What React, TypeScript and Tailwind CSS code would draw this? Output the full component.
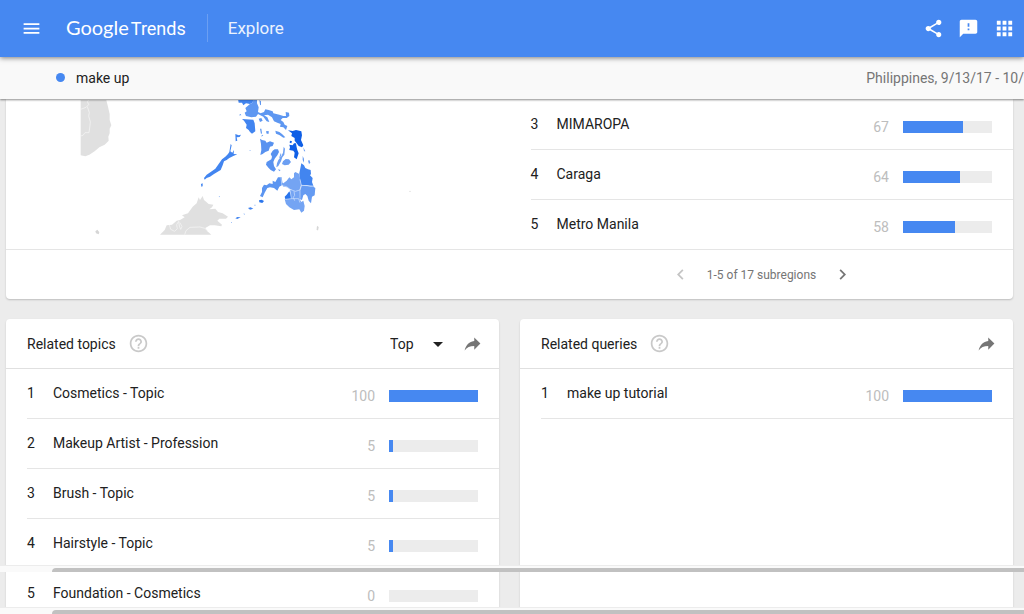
import {
  MdApps,
  MdArrowDropDown,
  MdChevronLeft,
  MdChevronRight,
  MdFeedback,
  MdHelpOutline,
  MdMenu,
  MdReply,
  MdShare,
} from "react-icons/md"

type Item = { rank: number; label: string; value: number }

const SUBREGIONS: Item[] = [
  { rank: 3, label: "MIMAROPA", value: 67 },
  { rank: 4, label: "Caraga", value: 64 },
  { rank: 5, label: "Metro Manila", value: 58 },
]

const TOPICS: Item[] = [
  { rank: 1, label: "Cosmetics - Topic", value: 100 },
  { rank: 2, label: "Makeup Artist - Profession", value: 5 },
  { rank: 3, label: "Brush - Topic", value: 5 },
  { rank: 4, label: "Hairstyle - Topic", value: 5 },
  { rank: 5, label: "Foundation - Cosmetics", value: 0 },
]

const QUERIES: Item[] = [{ rank: 1, label: "make up tutorial", value: 100 }]

function RankedList({ items }: { items: Item[] }) {
  return (
    <ol className="pl-[21px]">
      {items.map((item) => (
        <li
          key={item.rank}
          className="flex h-[50px] items-center border-b border-[#e5e5e5] pb-[2px] pr-[21px]"
        >
          <span className="w-[26px]">{item.rank}</span>
          <span className="flex-1 whitespace-nowrap">{item.label}</span>
          <div className="flex items-center gap-[14px] pt-[6px]">
            <span className="text-[#bdbdbd]">{item.value}</span>
            <div className="h-3 w-[89px] bg-[#ececec]">
              <div className="h-full bg-[#4688f1]" style={{ width: `${item.value}%` }} />
            </div>
          </div>
        </li>
      ))}
    </ol>
  )
}

function RegionMap() {
  return (
    <svg viewBox="0 0 420 149" className="h-[149px] w-[420px]" role="img" aria-label="Interest by subregion">
      <g transform="translate(54 -10) scale(0.33333)" fill="#e0e0e0">
        <path d="M62 27H138L144 50 149 72 149 90 154 106 149 116 149 130 145 140 146 152 134 164 118 172 104 184 88 194 76 199 62 196Z" />
        <path d="M106 424l6-5 6 8-2 6-8-3z" fill="#d6d6d6" />
        <path
          d="M62 58l16-6 8-8-4-10 8-7M82 50l6 18-2 10 5 18-2 18-2 14-12 0-6 8-7 2"
          fill="none"
          stroke="#f7f7f7"
          strokeWidth="2"
        />
      </g>
      <g transform="translate(184 -10) scale(0.33333)">
        {/* Borneo */}
        <path
          fill="#e0e0e0"
          d="M-90 434L-76 420-70 406-54 404-40 392-30 390-16 382-24 376-6 370 8 350 20 340 26 322 30 330 38 318 42 330 56 342 70 344 66 352 58 358 76 356 84 366 98 370 114 380 108 386 88 386 82 392 96 404 94 409 74 406 60 406 46 414 52 424 64 434Z"
        />
        <path
          d="M-62 404l4 14 12 6 8-8-2-12 6-10 2 14 4 10 4-8-6-12M-16 434l4-12 12-10 30-1 14 4 10 8"
          fill="none"
          stroke="#f7f7f7"
          strokeWidth="2"
        />
        <path fill="#d6d6d6" d="M381 407l5 4-2 11-4-4z" />
        <circle cx="660" cy="304" r="2" fill="#d6d6d6" />

        {/* Luzon */}
        <path fill="#4285f0" d="M144 27H190L188 38 180 42 168 40 160 46 156 38 146 38Z" />
        <path
          fill="#5e97f1"
          d="M190 27H201V40L206 52 204 66 212 70 222 66 226 58 236 60 248 64 250 70 268 74 280 78 288 78 287 66 297 68 298 78 290 84 278 84 272 90 280 96 284 104 292 108 288 120 280 112 270 110 272 102 262 98 252 94 246 82 234 74 222 76 232 82 238 96 230 94 220 80 204 72 198 80 184 82 168 78 164 68 170 64 166 54 180 42 188 38Z"
        />
        <path fill="#5e97f1" d="M206 86l8-2 4 8-8 4zM210 116l4 0 2 14-3 2zM228 124l8-1 0 8-6 0zM208 30l5 4 0 12-3-2zM146 76l6-4 2 4zM256 122l12 4 8 6 10 10-6 1-12-8-10-4zM216 134l4 2-6 4z" />

        {/* MIMAROPA */}
        <path fill="#4285f0" d="M156 87L190 89 194 100 196 124 186 131 180 126 176 120 168 114 170 104 162 92Z" />
        <path
          fill="#4285f0"
          d="M122 162L125 166 121 184 127 188 132 180 131 192 142 193 130 198 118 204 110 210 102 214 98 226 92 240 82 246 72 252 60 260 50 264 44 269 42 264 50 254 62 246 76 236 86 222 96 208 106 200 114 192 118 186 120 174ZM136 132L146 136 153 134 149 141 140 142 142 152 137 154ZM33 282L38 280 38 289 34 290Z"
        />

        {/* Visayas */}
        <path fill="#0f5fe6" d="M294 121L308 123 318 120 334 124 336 136 333 150 340 166 336 172 326 168 320 160 314 152 314 144 304 138 306 130Z" />
        <path fill="#0f5fe6" d="M298 164l10 2 4-6 6 0 2 12 2 8 4 10-2 6-4 12-8-6 2-14-4-6-12-2 2-8zM300 152l6 2-2 6-5-2z" />
        <path fill="#5892f0" d="M210 146L216 150 226 152 230 158 240 154 252 158 248 168 240 170 236 182 226 186 218 192 211 195 214 180 213 162Z" />
        <path fill="#5892f0" d="M248 182L254 178 264 178 267 186 262 196 254 206 250 216 252 228 258 238 252 245 242 240 236 234 228 224 230 216 244 208 246 200 242 192Z" />
        <path fill="#6c9ff2" d="M281 170l4 6-2 18-6 8-4 12-8 14-6 4 2-12 4-10 8-10 6-12zM268 202l4-12 2 2-4 16zM279 214l8-7 10 1 6 8-7 8-12 2-8-4z" />
        <path fill="#6c9ff2" d="M340 172l4 8 2 4-4 0zM338 198l4 8 0 12-4-8zM354 212l4-2 3 8-4 4zM264 238l8 2-4 4z" />

        {/* Mindanao */}
        <path fill="#4285f0" d="M334 220L342 226 346 234 354 238 362 240 363 252 360 256 368 264 366 276 371 290 350 286 334 286 330 270 328 250Z" />
        <path fill="#74a4f3" d="M272 276L280 280 290 272 298 262 304 268 312 262 312 250 316 246 328 252 334 286 330 300 316 304 300 298 292 292 280 290Z" />
        <path fill="#5b95f1" d="M264 262L275 262 278 284 268 290 262 302 252 294 240 292 232 294 224 308 218 322 210 318 216 306 216 294 222 284 230 286 238 280 248 282 248 272 256 276Z" />
        <path fill="#659bf2" d="M334 286L370 290 376 294 374 316 366 320 363 340 356 332 352 318 346 312 340 316 336 330 326 326 328 302Z" />
        <path fill="#74a4f3" d="M300 300L330 300 328 326 334 336 340 332 344 348 342 362 334 368 328 358 312 360 298 352 288 342 284 328 302 326Z" />
        <path fill="#2a75ec" d="M290 314L298 304 302 312 304 326 286 328 284 320Z" />
        <path
          d="M273 262l3 26M278 288l12 2 10 8 16 6 14-4 4-14 36 2M330 268l4 18-4 14 0 26M300 300l4 26-18 2M312 304l2 12-4 6 4 10M304 326l22 0 4 12"
          fill="none"
          stroke="#d5e4fc"
          strokeWidth="2"
        />
        <path fill="#2a75ec" d="M207 331l8-2 7 4-5 6-9-2z" />
        <path fill="#4285f0" d="M174 354l8-2 8 4-10 3zM136 385l6-4 10 1-10 5zM122 397l4 0 0 2zM160 371l4 0 0 3zM86 319l3 0 0 3zM192 345l4-1 0 3zM178 180l3 0 0 3z" />
      </g>
    </svg>
  )
}

function CardHeader({ title, sortable }: { title: string; sortable?: boolean }) {
  return (
    <div className="flex h-[50px] items-center border-b border-[#e0e0e0] pl-[21px] pr-4">
      <h2>{title}</h2>
      <button aria-label={`Help: ${title}`} className="ml-3 text-[#c9c9c9]">
        <MdHelpOutline size={21} />
      </button>
      <div className="ml-auto flex items-center gap-3">
        {sortable && (
          <div className="relative flex items-center">
            <select
              aria-label="Sort topics"
              className="w-[60px] cursor-pointer appearance-none bg-transparent outline-none"
            >
              <option>Top</option>
            </select>
            <MdArrowDropDown size={24} className="pointer-events-none absolute right-0" />
          </div>
        )}
        <button aria-label={`Share ${title}`} className="text-[#757575]">
          <MdReply size={21} className="-scale-x-100" />
        </button>
      </div>
    </div>
  )
}

function ScrollTrack() {
  return (
    <div className="border-t border-[#ececec] bg-[#fafafa] pl-[52px] pt-[2px]">
      <div className="h-1 rounded-tl-sm bg-[#c1c1c1]" />
    </div>
  )
}

export default function App() {
  return (
    <div className="relative flex h-screen flex-col overflow-hidden bg-[#ececec] font-['Roboto',sans-serif] text-[14px] leading-5 text-[#212121]">
      <header className="relative z-20 flex h-[57px] shrink-0 items-center bg-[#4688f1] pb-px pl-[21px] pr-2 text-white shadow-[0_1px_5px_rgba(0,0,0,0.5)]">
        <button aria-label="Menu">
          <MdMenu size={21} />
        </button>
        <a href="#home" className="ml-6 flex items-baseline leading-6">
          <span className="font-['Lato',sans-serif] text-[20px]">Google</span>
          <span className="ml-[2px] text-[18px]">Trends</span>
        </a>
        <div className="ml-[21px] h-7 w-px bg-white/20" />
        <a href="#explore" className="ml-5 text-[17px] leading-6 text-white/90">
          Explore
        </a>
        <div className="ml-auto flex items-center gap-[14px]">
          <button aria-label="Share">
            <MdShare size={21} />
          </button>
          <button aria-label="Send feedback">
            <MdFeedback size={21} />
          </button>
          <button aria-label="Google apps">
            <MdApps size={23} />
          </button>
        </div>
      </header>

      <div className="relative z-10 flex h-[42px] shrink-0 items-center bg-[#f9f9f9] pb-px pl-14 shadow-[0_1px_2px_rgba(0,0,0,0.45)]">
        <span className="size-[9px] rounded-full bg-[#4688f1]" />
        <span className="ml-[11px]">make up</span>
        <span className="ml-auto whitespace-nowrap text-[#757575]">Philippines, 9/13/17 - 10/</span>
      </div>

      <main className="flex min-h-0 flex-1 flex-col gap-5 overflow-hidden pl-[6px] pr-[11px]">
        <section className="shrink-0 rounded-b-sm bg-white pt-px shadow-[0_1px_2px_rgba(0,0,0,0.2)]">
          <div className="flex">
            <div className="flex-1 border-b border-[#e5e5e5]">
              <RegionMap />
            </div>
            <div className="w-1/2">
              <RankedList items={SUBREGIONS} />
            </div>
          </div>
          <div className="-mt-px flex h-[50px] items-center justify-center border-t border-[#e5e5e5] pl-[504px] text-[#757575]">
            <button aria-label="Previous page" disabled className="text-[#c4c4c4]">
              <MdChevronLeft size={21} />
            </button>
            <span className="mx-4 text-[12px]">1-5 of 17 subregions</span>
            <button aria-label="Next page">
              <MdChevronRight size={21} />
            </button>
          </div>
        </section>

        <div className="grid shrink-0 grid-cols-2 gap-[21px]">
          <section className="rounded-sm bg-white shadow-[0_1px_2px_rgba(0,0,0,0.15)]">
            <CardHeader title="Related topics" sortable />
            <RankedList items={TOPICS} />
          </section>
          <section className="rounded-sm bg-white shadow-[0_1px_2px_rgba(0,0,0,0.15)]">
            <CardHeader title="Related queries" />
            <RankedList items={QUERIES} />
          </section>
        </div>
      </main>

      <div className="absolute inset-x-0 bottom-[42px]">
        <ScrollTrack />
      </div>
      <div className="absolute inset-x-0 bottom-0">
        <ScrollTrack />
      </div>
    </div>
  )
}
